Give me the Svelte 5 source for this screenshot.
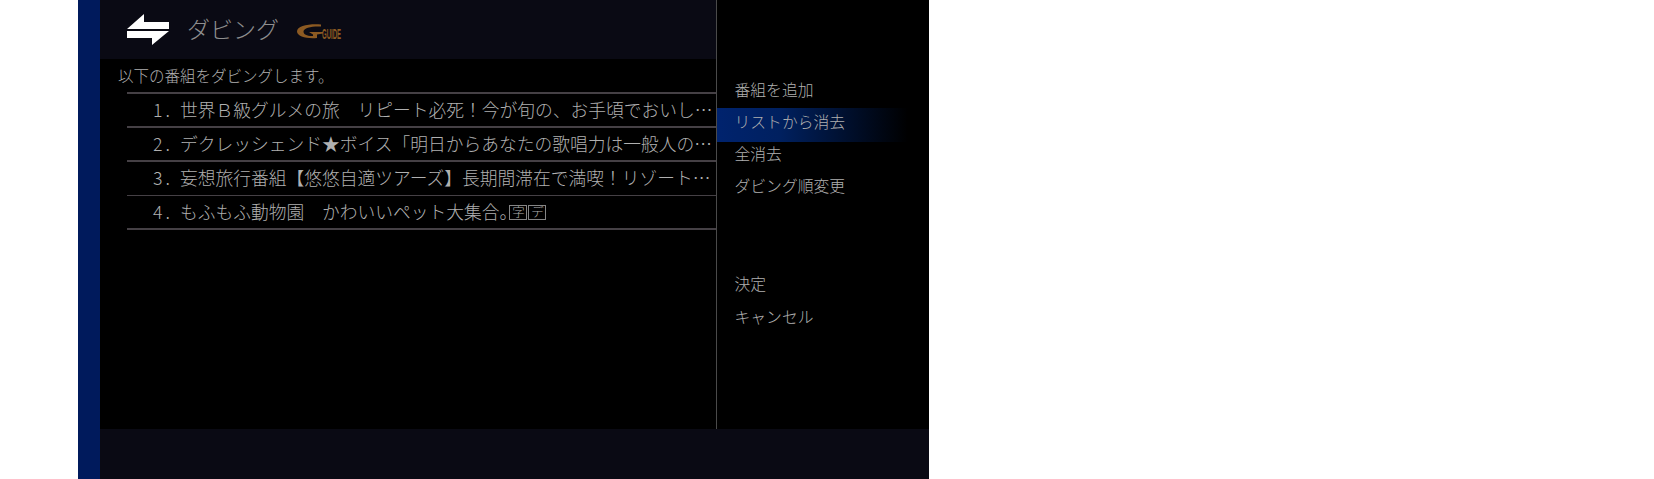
<script lang="ts">
  // Dubbing list screen: programme list on the left, action menu on the right.
  const programs = [
    { text: '世界Ｂ級グルメの旅　リピート必死！今が旬の、お手頃でおいし…' },
    { text: 'デクレッシェンド★ボイス「明日からあなたの歌唱力は一般人の…' },
    { text: '妄想旅行番組【悠悠自適ツアーズ】長期間滞在で満喫！リゾート…' },
    { text: 'もふもふ動物園　かわいいペット大集合', tail: '。', marks: ['字', 'デ'] },
  ];
  const actions = [
    { label: '番組を追加' },
    { label: 'リストから消去', active: true },
    { label: '全消去' },
    { label: 'ダビング順変更' },
  ];
  const confirms = ['決定', 'キャンセル'];
</script>

<div class="page">
  <div class="screen">
    <div class="stripe"></div>
    <div class="main">
      <div class="body">
        <section class="left">
          <header class="head">
            <svg class="swap" width="42" height="32" viewBox="0 0 42 32">
              <path d="M17 0 V8 H42 V15 H0 Z" fill="#fff" />
              <path d="M0 17 H42 L25 31 V24 H0 Z" fill="#fff" />
            </svg>
            <h1>ダビング</h1>
            <div class="logo">
              <svg width="26" height="16" viewBox="0 0 26 16">
                <path d="M24 0.5 C12 -0.5 0 2 0 7.5 C0 12.5 10 15 20 14 L20 10.5 L26 9.5 L26 8 L12 8 L16 10.5 L16 12 C10 12.2 6.5 10.5 6.5 7.5 C6.5 4 15 2 24 2.5 Z" fill="#8c5a22" />
              </svg>
              <span class="guide"><span>GUIDE</span></span>
            </div>
          </header>

          <p class="lead">以下の番組をダビングします。</p>
          <ol>
            {#each programs as program, i}
              <li>
                <span class="num">{i + 1}.</span>
                <span class="title">{program.text}{#if program.tail}<span class="tail">{program.tail}</span>{/if}</span>
                {#if program.marks}
                  <span class="marks">
                    {#each program.marks as mark}
                      <span class="mark">{mark}</span>
                    {/each}
                  </span>
                {/if}
              </li>
            {/each}
          </ol>
        </section>

        <nav class="menu">
          <div class="group">
            {#each actions as action}
              <div class="item" class:active={action.active}>{action.label}</div>
            {/each}
          </div>
          <div class="group">
            {#each confirms as label}
              <div class="item">{label}</div>
            {/each}
          </div>
        </nav>
      </div>

      <footer class="foot"></footer>
    </div>
  </div>
</div>

<style>
  :global(body) {
    margin: 0;
    background: #fff;
  }

  .page {
    height: 479px;
    padding-left: 78px;
    overflow: hidden;
    font-family: "Noto Sans CJK JP", "Noto Sans", sans-serif;
    font-weight: 300;
    color: #b0b0b0;
  }

  .screen {
    width: 851px;
    height: 479px;
    display: flex;
    background: #000;
  }

  .stripe {
    width: 22px;
    background: #001a5c;
  }

  .main {
    flex: 1;
    display: flex;
    flex-direction: column;
  }

  .body {
    flex: 1;
    min-height: 0;
    display: flex;
  }

  .left {
    width: 616px;
    border-right: 1px solid #4a4a4a;
  }

  .head {
    height: 59px;
    display: flex;
    align-items: center;
    padding-left: 27px;
    background: #0a0a14;
  }

  .swap {
    margin-right: 18px;
  }

  h1 {
    margin: 0 0 2px;
    font-size: 23px;
    font-weight: 300;
    line-height: 1;
    color: #8f8f8f;
  }

  .logo {
    display: flex;
    align-items: flex-end;
    margin-left: 18px;
    margin-top: 5px;
  }

  .guide {
    width: 19px;
    height: 11px;
    margin-left: -1px;
    color: #8c5a22;
    font-family: "Liberation Sans", sans-serif;
    font-size: 14px;
    font-weight: 700;
    line-height: 11px;
  }

  .guide span {
    display: inline-block;
    transform: scaleX(0.43);
    transform-origin: left;
  }

  .lead {
    margin: 4px 0 0 18px;
    font-size: 15.5px;
    line-height: 25px;
    height: 29px;
  }

  ol {
    margin: 0 0 0 27px;
    padding: 0;
    list-style: none;
    border-top: 2px solid #454045;
  }

  li {
    height: 32px;
    box-sizing: content-box;
    display: flex;
    align-items: center;
    border-bottom: 2px solid #454045;
    font-size: 17.75px;
    white-space: nowrap;
  }

  li:nth-child(3) {
    height: 33px;
    border-bottom-width: 1px;
  }

  .num {
    width: 53px;
    flex: none;
    padding-left: 26px;
    padding-bottom: 3px;
    box-sizing: border-box;
    letter-spacing: 3px;
  }

  .title {
    padding-bottom: 3px;
  }

  .tail {
    font-feature-settings: "halt";
  }

  .marks {
    display: flex;
    gap: 1px;
    margin-left: 1px;
  }

  .mark {
    width: 18px;
    height: 15px;
    border: 1px solid #858585;
    box-sizing: border-box;
    font-size: 12.5px;
    line-height: 12px;
    text-align: center;
  }

  .menu {
    flex: 1;
    padding-top: 73.5px;
    display: flex;
    flex-direction: column;
    gap: 65.5px;
  }

  .item {
    height: 32.3px;
    line-height: 31px;
    padding-left: 17.5px;
    font-size: 15.8px;
  }

  .item.active {
    height: 34px;
    margin: 2px 0 -3.7px;
    line-height: 27px;
    background: linear-gradient(90deg, #00236e, #00205f 30%, #000 90%);
  }

  .foot {
    height: 50px;
    background: #0a0a14;
  }
</style>
